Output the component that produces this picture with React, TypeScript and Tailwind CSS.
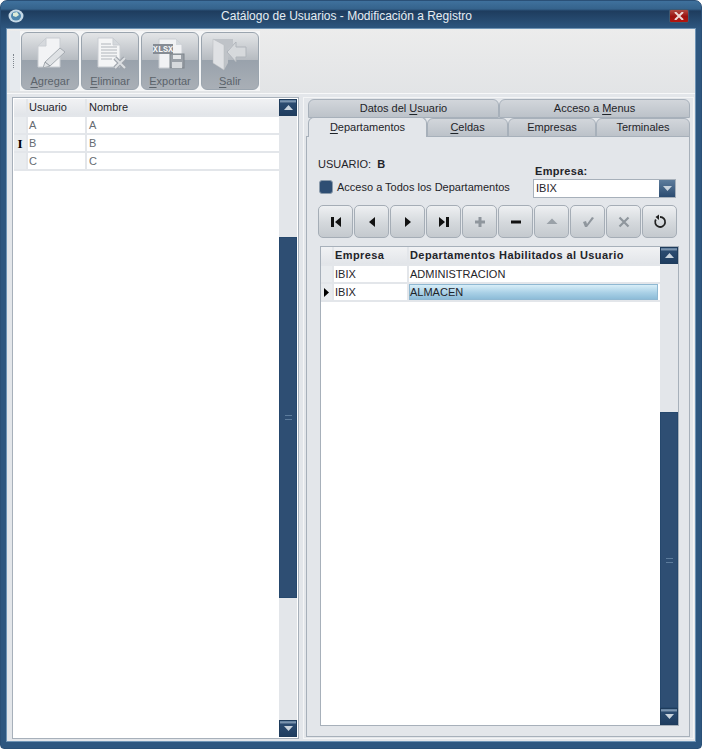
import React from "react";

const font = { fontFamily: '"Liberation Sans", Arial, sans-serif' };

function U({ children }: { children: React.ReactNode }) {
  return <span className="underline underline-offset-2">{children}</span>;
}

function AddIcon() {
  return (
    <svg width="40" height="36" viewBox="0 0 40 36">
      <path d="M8 11 L16 3 H30 V32 H8 Z" fill="#f2f3f5" stroke="#c9cdd2" />
      <path d="M8 11 H16 V3 Z" fill="#d6d9dd" stroke="#c9cdd2" />
      <path d="M13 33 L15 27 L30 13 L35 17 L20 31 Z" fill="#dfe2e5" stroke="#a5abb1" />
      <path d="M15 27 L20 31" stroke="#8f959c" />
    </svg>
  );
}

function DeleteIcon() {
  return (
    <svg width="40" height="36" viewBox="0 0 40 36">
      <path d="M8 3 H23 L30 10 V32 H8 Z" fill="#f4f5f6" stroke="#c9cdd2" />
      <path d="M23 3 V10 H30 Z" fill="#d4d8dc" stroke="#c9cdd2" />
      <g stroke="#b0b5bb">
        <path d="M11 9 H21" />
        <path d="M11 12 H27" />
        <path d="M11 15 H27" />
        <path d="M11 18 H27" />
        <path d="M11 21 H27" />
        <path d="M11 24 H22" />
      </g>
      <path d="M25 23 L35 33 M35 23 L25 33" stroke="#9fa5ac" strokeWidth="4.5" />
      <path d="M25 23 L35 33 M35 23 L25 33" stroke="#dcdfe2" strokeWidth="2" />
    </svg>
  );
}

function ExportIcon() {
  return (
    <svg width="40" height="36" viewBox="0 0 40 36">
      <path d="M9 4 H26 L32 10 V33 H9 Z" fill="#f1f2f4" stroke="#c9cdd2" />
      <path d="M26 4 V10 H32 Z" fill="#d4d8dc" />
      <rect x="3" y="9" width="20" height="10" fill="#868c94" />
      <text x="13" y="17" textAnchor="middle" fontSize="8.5" fontWeight="700" fill="#f8f9fa" fontFamily="Liberation Mono, monospace">XLSX</text>
      <rect x="20" y="19" width="14" height="14" fill="#9aa0a7" stroke="#7f858c" />
      <rect x="23" y="20" width="8" height="4" fill="#e6e8ea" />
      <rect x="22" y="27" width="10" height="6" fill="#d6d9dc" />
    </svg>
  );
}

function ExitIcon() {
  return (
    <svg width="40" height="36" viewBox="0 0 40 36">
      <path d="M3 4 H23 V10 L18 14 V28 L14 35 L3 28 Z" fill="#bfc3c8" />
      <path d="M3 4 L14 10 V35 L3 28 Z" fill="#dfe1e4" stroke="#b4b8bd" strokeWidth="0.5" />
      <path d="M17 17 L26 7 V12 H36 V22 H26 V27 Z" fill="#d6d9dc" stroke="#b0b5bb" />
    </svg>
  );
}

function ToolButton({ icon, first, rest }: { icon: React.ReactNode; first: string; rest: string }) {
  return (
    <div className="flex h-[58px] w-[58px] flex-col items-center rounded-[6px] border border-[#9aa4ae] bg-[linear-gradient(#e3e5e7_0%,#b6bbc1_48%,#99a2ac_49%,#a9afb6_100%)]">
      <div className="mt-[2px] h-[39px]">{icon}</div>
      <div className="text-[11px] leading-[14px] text-[#5b636b]">
        <U>{first}</U>
        {rest}
      </div>
    </div>
  );
}

function ScrollButton({ down }: { down?: boolean }) {
  return (
    <div className="flex h-[17px] w-full shrink-0 items-center justify-center border border-[#1f3c5c] bg-[linear-gradient(#5d7c9c_0%,#8098b2_12%,#2b4b70_20%,#1f3d60_100%)]">
      <svg width="9" height="5" viewBox="0 0 9 5">
        <path d={down ? "M0 0 H9 L4.5 5 Z" : "M4.5 0 L9 5 H0 Z"} fill="#c9d3dd" />
      </svg>
    </div>
  );
}

function ScrollBar({ before, thumb }: { before: number; thumb: number }) {
  return (
    <div className="flex w-[18px] shrink-0 flex-col bg-[#e3e6ea]">
      <ScrollButton />
      <div className="shrink-0" style={{ height: before }} />
      <div className="flex shrink-0 items-center justify-center border border-[#26486d] bg-[#2e4e73]" style={{ height: thumb }}>
        <div className="h-[5px] w-[7px] border-y border-[#5d7c9c]" />
      </div>
      <div className="flex-1" />
      <ScrollButton down />
    </div>
  );
}

function UserRow({ mark, a, b }: { mark?: React.ReactNode; a: string; b: string }) {
  return (
    <div className="flex h-[18px] border-b-2 border-[#e3e6ea] text-[11px] leading-[16px] text-[#666c72]">
      <div className="flex w-[12px] shrink-0 items-center justify-center bg-[#e9ecef]">{mark}</div>
      <div className="w-[61px] border-x-2 border-[#e3e6ea] pl-px">{a}</div>
      <div className="flex-1 pl-[2px]">{b}</div>
    </div>
  );
}

function Tab({ w, active, children }: { w: string; active?: boolean; children: React.ReactNode }) {
  return (
    <div className={`flex items-center justify-center rounded-t-[6px] border border-[#a7b0ba] text-[11px] text-[#1f2429] ${w} ${active ? "relative z-10 h-[20px] border-b-0 bg-[#e3e6ea] pb-px" : "h-[19px] bg-[linear-gradient(#d2d6db,#bcc2c9)]"}`}>
      {children}
    </div>
  );
}

function NavButton({ children }: { children: React.ReactNode }) {
  return (
    <div className="flex h-[33px] w-[35px] items-center justify-center rounded-[5px] border border-[#a5adb6] bg-[linear-gradient(#eef0f2_0%,#d4d8dc_55%,#c4c9ce_100%)]">
      <svg width="16" height="16" viewBox="0 0 16 16">{children}</svg>
    </div>
  );
}

export default function App() {
  return (
    <div className="h-[750px] w-[705px] bg-white" style={font}>
      <div className="flex h-[749px] w-[702px] flex-col rounded-t-[7px] rounded-b-[4px] border border-[#2a5077] bg-[linear-gradient(#3f719d_0px,#35638c_8px,#1e3c5e_10px,#2e5780_28px)]">
        {/* title bar */}
        <div className="flex h-[27px] shrink-0 items-center pl-[7px] pr-[12px] pt-[3px]">
          <svg width="16" height="14" viewBox="0 0 16 14">
            <ellipse cx="8" cy="7" rx="7.5" ry="6.5" fill="#c5d8e6" />
            <ellipse cx="8" cy="7" rx="5" ry="4.5" fill="#4d86ad" />
            <path d="M5 4 L9 3 L11 6 L8 8 L5 7 Z" fill="#dcebd8" />
          </svg>
          <div className="flex-1 text-center text-[12px] text-[#e6edf3]">Catálogo de Usuarios - Modificación a Registro</div>
          <div className="flex h-[14px] w-[20px] items-center justify-center rounded-[2px] border border-[#3e5870] bg-[linear-gradient(#b04a42,#9c1210_55%,#b3160f)]">
            <svg width="10" height="8" viewBox="0 0 10 8">
              <path d="M1 0 L9 8 M9 0 L1 8" stroke="#eed9d6" strokeWidth="2" />
            </svg>
          </div>
        </div>

        {/* client area */}
        <div className="mx-[5px] mb-[6px] flex min-h-0 flex-1 flex-col border border-[#6f94b5] bg-[#e3e6ea]">
          {/* toolbar */}
          <div className="flex h-[64px] shrink-0 items-start bg-[linear-gradient(#ececec,#e2e4e6)] pl-[3px] pt-[2px]">
            <div className="flex h-[60px] w-[10px] shrink-0 items-center bg-[#e6eaee] pl-[3px]">
              <div className="h-[14px] border-l border-dotted border-[#7e868e]" />
            </div>
            <div className="flex h-[60px] gap-[2px] bg-[#f4f5f6] px-px pt-px">
              <ToolButton icon={<AddIcon />} first="A" rest="gregar" />
              <ToolButton icon={<DeleteIcon />} first="E" rest="liminar" />
              <ToolButton icon={<ExportIcon />} first="E" rest="xportar" />
              <ToolButton icon={<ExitIcon />} first="S" rest="alir" />
            </div>
          </div>

          <div className="flex min-h-0 flex-1 gap-[4px] border-t border-[#f7f8f9] pb-[2px] pl-[5px] pr-px pt-[3px]">
            {/* users grid */}
            <div className="flex w-[287px] shrink-0 border border-[#a7b0ba] bg-white p-px">
              <div className="flex min-w-0 flex-1 flex-col">
                <div className="flex h-[18px] border-b-2 border-[#e3e6ea] bg-[linear-gradient(#f1f2f4,#e2e5e9)] text-[11px] leading-[16px] text-[#1f2429]">
                  <div className="w-[12px] shrink-0" />
                  <div className="w-[61px] border-x-2 border-[#e3e6ea] pl-px">Usuario</div>
                  <div className="flex-1 pl-[2px]">Nombre</div>
                </div>
                <UserRow a="A" b="A" />
                <UserRow a="B" b="B" mark={<span className="text-[13px] font-bold leading-none text-black" style={{ fontFamily: '"Liberation Serif", serif' }}>I</span>} />
                <UserRow a="C" b="C" />
              </div>
              <ScrollBar before={121} thumb={361} />
            </div>

            {/* right panel */}
            <div className="flex min-w-0 flex-1 flex-col border border-[#f4f5f6] pb-px pl-[2px] pr-[3px] pt-px">
              <div className="flex justify-end">
                <Tab w="w-[191px]">Datos del&nbsp;<U>U</U>suario</Tab>
                <Tab w="w-[191px]">Acceso a&nbsp;<U>M</U>enus</Tab>
              </div>
              <div className="-mt-px flex items-end justify-end">
                <Tab w="w-[119px]" active><U>D</U>epartamentos</Tab>
                <Tab w="w-[81px]"><U>C</U>eldas</Tab>
                <Tab w="w-[88px]">Empresas</Tab>
                <Tab w="w-[94px]">Terminales</Tab>
              </div>
              <div className="-mt-px flex min-h-0 flex-1 flex-col border border-[#a7b0ba] bg-[#e3e6ea] pb-[10px] pl-[13px] pr-[10px] pt-[20px]">
                <div className="flex h-[45px] shrink-0">
                  <div className="-ml-[2px] flex-1">
                    <div className="text-[11px] leading-[14px] text-[#1f2429]">
                      USUARIO:&nbsp; <span className="font-bold">B</span>
                    </div>
                    <div className="ml-px mt-[9px] flex items-center gap-[4px] text-[11px] leading-[14px] text-[#1f2429]">
                      <div className="h-[14px] w-[14px] rounded-[3px] border border-[#8b9bab] bg-[#2e4e73]" />
                      Acceso a Todos los Departamentos
                    </div>
                  </div>
                  <div className="mr-[3px] mt-[7px] w-[143px]">
                    <div className="pl-[2px] text-[11px] font-bold leading-[15px] tracking-[0.3px] text-[#1f2429]">Empresa:</div>
                    <div className="flex h-[19px] border border-[#a7b0ba] bg-white">
                      <div className="flex-1 pl-[2px] text-[11px] leading-[17px] text-[#1f2429]">IBIX</div>
                      <div className="flex w-[16px] items-center justify-center bg-[linear-gradient(#5d7c9c,#2b4b70)]">
                        <svg width="9" height="5" viewBox="0 0 9 5"><path d="M0 0 H9 L4.5 5 Z" fill="#c9d3dd" /></svg>
                      </div>
                    </div>
                  </div>
                </div>

                <div className="-ml-[2px] mt-[3px] flex h-[33px] shrink-0 gap-px">
                  <NavButton><path d="M3 3 H6 V13 H3 Z M13 3 V13 L7 8 Z" fill="#111" /></NavButton>
                  <NavButton><path d="M11 3 V13 L5 8 Z" fill="#111" /></NavButton>
                  <NavButton><path d="M5 3 V13 L11 8 Z" fill="#111" /></NavButton>
                  <NavButton><path d="M3 3 V13 L9 8 Z M10 3 H13 V13 H10 Z" fill="#111" /></NavButton>
                  <NavButton><path d="M6.5 3 H9.5 V6.5 H13 V9.5 H9.5 V13 H6.5 V9.5 H3 V6.5 H6.5 Z" fill="#8f969d" /></NavButton>
                  <NavButton><path d="M3 6.5 H13 V9.5 H3 Z" fill="#111" /></NavButton>
                  <NavButton><path d="M8 4.5 L13.5 10 H2.5 Z" fill="#9aa1a8" /></NavButton>
                  <NavButton><path d="M3 8 L6 7 L7 10 L12 3 L14 4 L7 13 H5 Z" fill="#8f969d" /></NavButton>
                  <NavButton><path d="M3.5 3.5 L12.5 12.5 M12.5 3.5 L3.5 12.5" stroke="#8f969d" strokeWidth="2.2" /></NavButton>
                  <NavButton>
                    <path d="M8 3 A5 5 0 1 1 3.8 5.5" fill="none" stroke="#222" strokeWidth="1.8" />
                    <path d="M7 0.5 V6 L3.5 3 Z" fill="#222" />
                  </NavButton>
                </div>

                {/* departments grid */}
                <div className="mt-[8px] flex min-h-0 flex-1 border border-[#a7b0ba] bg-white">
                  <div className="flex min-w-0 flex-1 flex-col">
                    <div className="flex h-[19px] border-b-2 border-[#e3e6ea] bg-[linear-gradient(#f1f2f4,#e2e5e9)] text-[11px] font-bold leading-[16px] tracking-[0.42px] text-[#1f2429]">
                      <div className="w-[11px] shrink-0" />
                      <div className="w-[77px] border-x-2 border-[#e3e6ea] pl-px">Empresa</div>
                      <div className="flex-1 pl-px">Departamentos Habilitados al Usuario</div>
                    </div>
                    <div className="flex h-[18px] border-b-2 border-[#e3e6ea] text-[11px] leading-[16px] text-[#1f2429]">
                      <div className="w-[11px] shrink-0 bg-[#e9ecef]" />
                      <div className="w-[77px] border-x-2 border-[#e3e6ea] pl-px">IBIX</div>
                      <div className="flex-1 pl-px">ADMINISTRACION</div>
                    </div>
                    <div className="flex h-[18px] border-b-2 border-[#e3e6ea] text-[11px] leading-[16px] text-[#1f2429]">
                      <div className="flex w-[11px] shrink-0 items-center justify-center bg-[#e9ecef]">
                        <svg width="5" height="9" viewBox="0 0 5 9"><path d="M0 0 L5 4.5 L0 9 Z" fill="#000" /></svg>
                      </div>
                      <div className="w-[77px] border-x-2 border-[#e3e6ea] pl-px">IBIX</div>
                      <div className="mr-[2px] flex-1 border border-[#8fb8d2] bg-[linear-gradient(#d8eef8,#a9d0e6_55%,#8dbcd8)] leading-[14px]">ALMACEN</div>
                    </div>
                  </div>
                  <ScrollBar before={148} thumb={296} />
                </div>
              </div>
            </div>
          </div>
        </div>
      </div>
    </div>
  );
}
